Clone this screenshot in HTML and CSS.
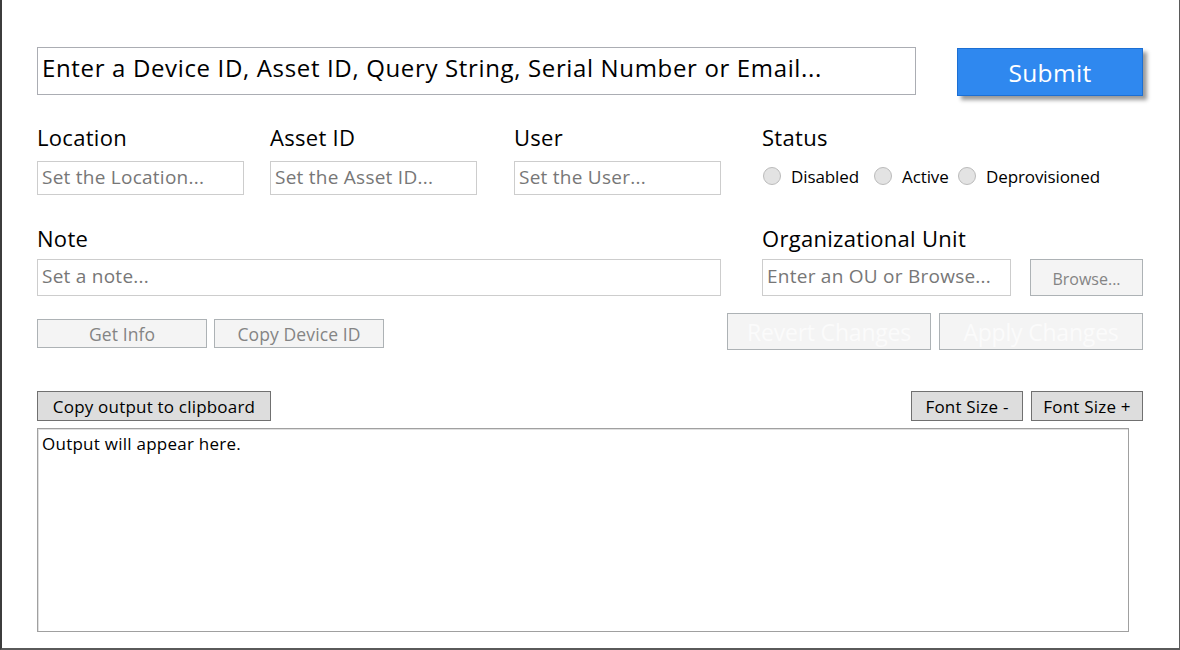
FILE: index.html
```html
<!DOCTYPE html>
<html>
<head>
<meta charset="utf-8">
<link rel="stylesheet" href="styles.css">
</head>
<body>
<div class="window">
  <div class="row-search">
    <div class="search-box">Enter a Device ID, Asset ID, Query String, Serial Number or Email...</div>
    <button class="submit">Submit</button>
  </div>

  <div class="row-fields">
    <div class="field f-loc">
      <div class="label">Location</div>
      <div class="input small">Set the Location...</div>
    </div>
    <div class="field f-asset">
      <div class="label">Asset ID</div>
      <div class="input small">Set the Asset ID...</div>
    </div>
    <div class="field f-user">
      <div class="label">User</div>
      <div class="input small">Set the User...</div>
    </div>
    <div class="field f-status">
      <div class="label">Status</div>
      <div class="radios">
        <div class="radio r1"><span class="dot"></span>Disabled</div>
        <div class="radio r2"><span class="dot"></span>Active</div>
        <div class="radio"><span class="dot"></span>Deprovisioned</div>
      </div>
    </div>
  </div>

  <div class="row-note">
    <div class="field f-note">
      <div class="label">Note</div>
      <div class="input note">Set a note...</div>
    </div>
    <div class="field f-ou">
      <div class="label">Organizational Unit</div>
      <div class="ou-line">
        <div class="input ou">Enter an OU or Browse...</div>
        <button class="btn-disabled browse">Browse...</button>
      </div>
    </div>
  </div>

  <div class="row-actions">
    <div class="left-actions">
      <button class="btn-disabled small-btn">Get Info</button>
      <button class="btn-disabled small-btn">Copy Device ID</button>
    </div>
    <div class="right-actions">
      <button class="btn-disabled big-btn">Revert Changes</button>
      <button class="btn-disabled big-btn">Apply Changes</button>
    </div>
  </div>

  <div class="row-output-tools">
    <button class="btn tool copy">Copy output to clipboard</button>
    <div class="font-tools">
      <button class="btn tool fs">Font Size -</button>
      <button class="btn tool fs">Font Size +</button>
    </div>
  </div>

  <div class="output">Output will appear here.</div>
</div>
</body>
</html>
```

FILE: styles.css
```css
html, body {
  margin: 0;
  padding: 0;
  background: #ffffff;
}

body {
  font-family: "Open Sans", "Noto Sans", "DejaVu Sans", sans-serif;
  color: #000;
}

.window {
  box-sizing: border-box;
  width: 1180px;
  height: 650px;
  border-left: 2px solid #3c3c3c;
  border-right: 1px solid #5a5a5a;
  border-bottom: 2px solid #5a5a5a;
  padding: 47px 36px 0 35px;
  background: #fff;
}

button {
  font-family: inherit;
  margin: 0;
  padding: 0;
  box-sizing: border-box;
}

.row-search {
  display: flex;
  align-items: flex-start;
}

.search-box {
  box-sizing: border-box;
  width: 879px;
  height: 48px;
  border: 1px solid #abadb3;
  font-size: 24px;
  line-height: 40px;
  padding-left: 4px;
  letter-spacing: 0.65px;
  white-space: nowrap;
  overflow: hidden;
}

.submit {
  margin-left: 41px;
  margin-top: 1px;
  width: 186px;
  height: 48px;
  background: #2f88ef;
  border: 1px solid #1c6fd3;
  color: #fff;
  font-size: 24.5px;
  letter-spacing: 0.3px;
  padding-top: 1px;
  box-shadow: 4px 4px 4px rgba(0,0,0,0.4);
}

.row-fields {
  display: flex;
  margin-top: 28px;
}

.label {
  font-size: 22px;
  line-height: 26px;
  height: 26px;
  letter-spacing: 0.3px;
  white-space: nowrap;
}

.f-loc { width: 233px; }
.f-asset { width: 244px; }
.f-user { width: 248px; }
.f-status { flex: 1; }

.input {
  box-sizing: border-box;
  border: 1px solid #cdcdcd;
  color: #777;
  font-size: 19px;
  padding-left: 4px;
  white-space: nowrap;
  overflow: hidden;
  letter-spacing: 0.25px;
}

.input.small {
  width: 207px;
  height: 34px;
  line-height: 31px;
  margin-top: 11px;
}

.radios {
  display: flex;
  margin-top: 13px;
  align-items: center;
  height: 26px;
}

.radio {
  display: flex;
  align-items: center;
  font-size: 17px;
  letter-spacing: -0.1px;
  white-space: nowrap;
}

.r1 { width: 111px; }
.r2 { width: 84px; }

.dot {
  box-sizing: border-box;
  width: 18px;
  height: 18px;
  border-radius: 50%;
  background: #e3e3e3;
  border: 1px solid #bbbbbb;
  margin: 0 10px 0 1px;
  flex: none;
}

.row-note {
  display: flex;
  margin-top: 30px;
}

.f-note { width: 725px; }
.f-ou { flex: 1; }

.input.note {
  width: 684px;
  height: 37px;
  line-height: 33px;
  margin-top: 8px;
}

.ou-line {
  display: flex;
  margin-top: 8px;
}

.input.ou {
  width: 249px;
  height: 37px;
  line-height: 33px;
}

.btn-disabled {
  background: #f4f4f4;
  border: 1px solid #adb2b5;
  color: #848484;
}

.browse {
  margin-left: 19px;
  width: 113px;
  height: 37px;
  font-size: 16px;
  padding-top: 2px;
}

.row-actions {
  display: flex;
  justify-content: space-between;
  align-items: flex-start;
  margin-top: 17px;
}

.left-actions {
  display: flex;
  gap: 7px;
  margin-top: 6px;
}

.small-btn {
  width: 170px;
  height: 29px;
  font-size: 17.5px;
  letter-spacing: 0.1px;
}

.right-actions {
  display: flex;
  gap: 8px;
}

.big-btn {
  width: 204px;
  height: 37px;
  font-size: 23px;
  color: #fbfbfb;
  letter-spacing: -0.2px;
}

.row-output-tools {
  display: flex;
  justify-content: space-between;
  margin-top: 41px;
}

.btn {
  background: #dddddd;
  border: 1px solid #707070;
  color: #000;
}

.tool {
  height: 30px;
  font-size: 17px;
  letter-spacing: 0.2px;
}

.copy { width: 234px; }

.font-tools {
  display: flex;
  gap: 8px;
}

.fs { width: 112px; }

.output {
  box-sizing: border-box;
  margin-top: 7px;
  width: 1092px;
  height: 204px;
  border: 1px solid #a0a0a0;
  box-shadow: inset 1px 1px 0 #e0e0e0;
  font-size: 17px;
  padding: 3px 4px;
  letter-spacing: 0.25px;
}
```
